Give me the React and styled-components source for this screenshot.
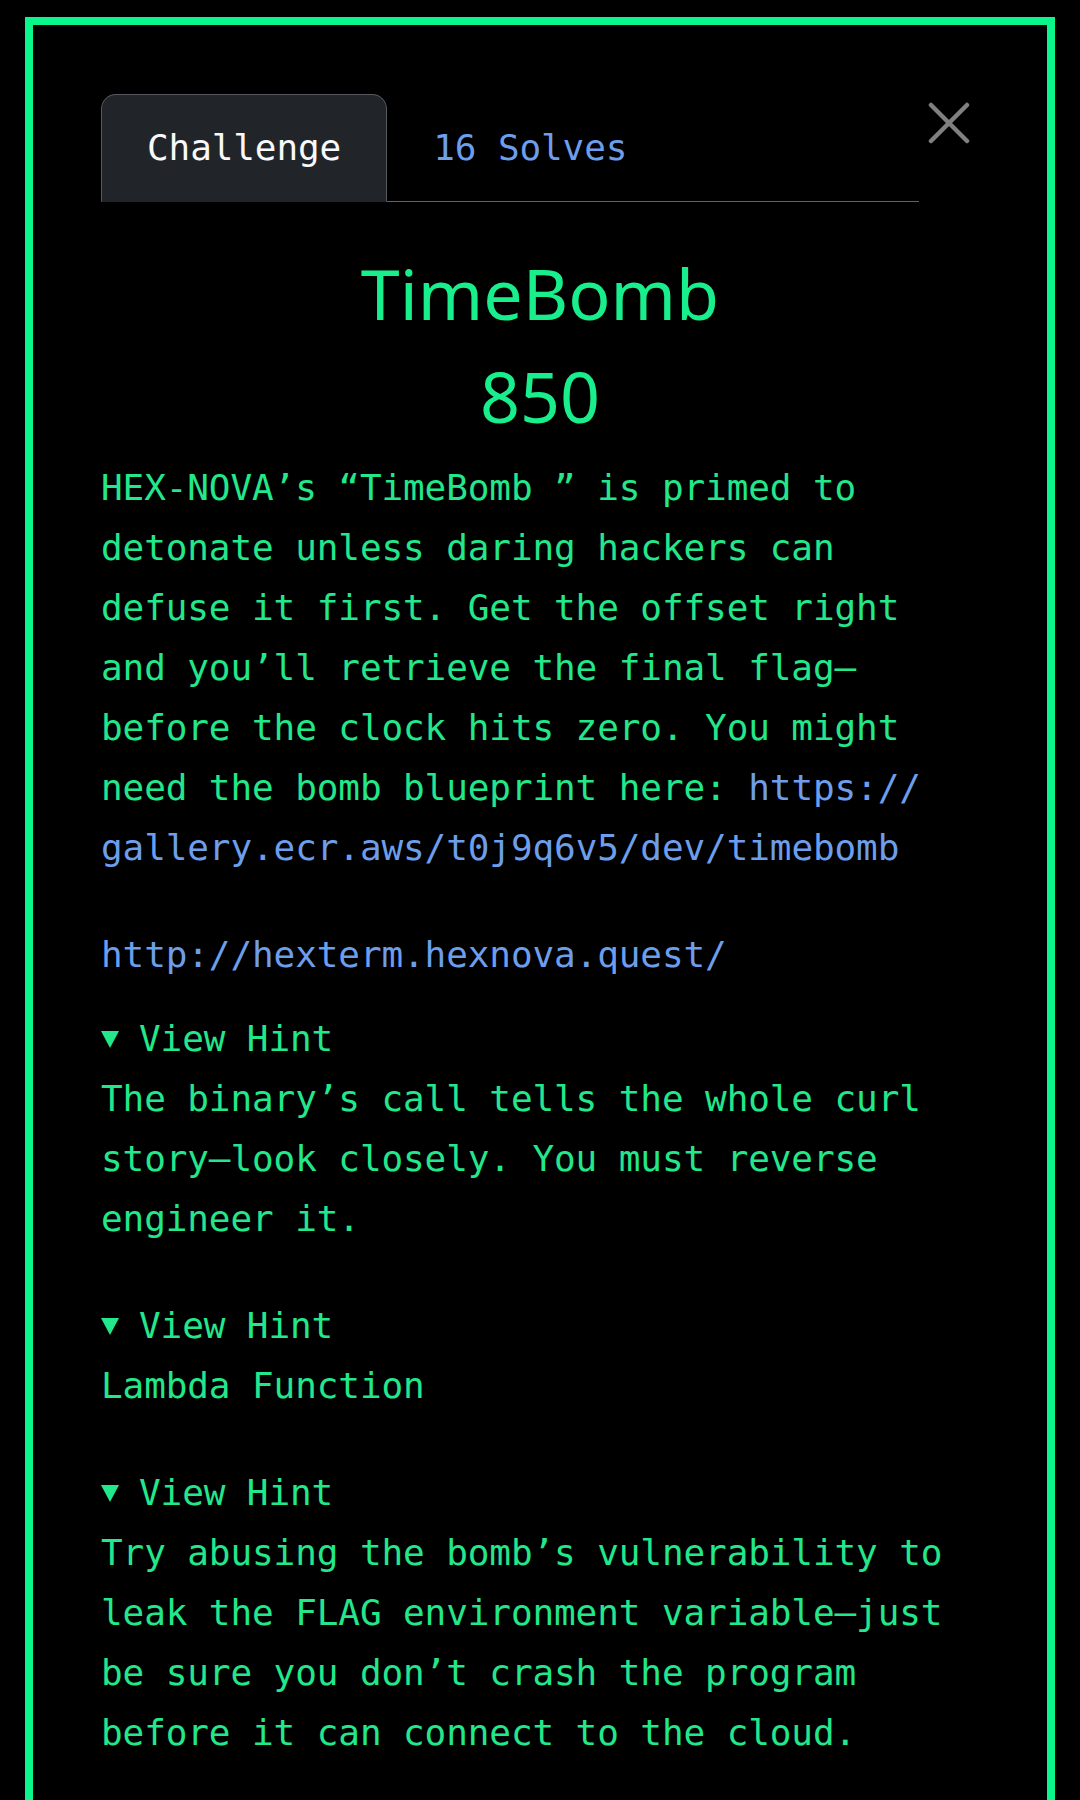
import React, { useState } from 'react';
import styled, { createGlobalStyle, css } from 'styled-components';

const GlobalStyle = createGlobalStyle`
  html, body {
    margin: 0;
    padding: 0;
    background: #000;
  }
  body {
    font-family: "DejaVu Sans Mono", "Liberation Mono", monospace;
  }
`;

const GREEN = '#22e78b';
const BLUE = '#6d9eeb';

const Page = styled.div`
  height: 1800px;
  overflow: hidden;
  box-sizing: border-box;
  padding: 17px 25px 0;
  background: #000;
`;

const Modal = styled.div`
  border: 8px solid #0bf68a;
  padding: 69px 68px 140px;
  background: #000;
`;

const Header = styled.div`
  display: flex;
  align-items: flex-start;
`;

const TabList = styled.nav`
  flex: 1;
  display: flex;
  border-bottom: 1px solid #5f6368;
`;

const Tab = styled.button`
  margin-bottom: -1px;
  padding: 23px 45px;
  font-family: inherit;
  font-size: 36px;
  line-height: 60px;
  letter-spacing: -0.1px;
  border: 1px solid transparent;
  border-radius: 15px 15px 0 0;
  background: transparent;
  color: ${BLUE};
  cursor: pointer;

  ${(props) =>
    props.$active &&
    css`
      background: #212529;
      border-color: #55595e;
      border-bottom-color: #212529;
      color: #f8f9fa;
    `}
`;

const CloseButton = styled.button`
  width: 60px;
  height: 57px;
  padding: 0;
  display: flex;
  align-items: center;
  justify-content: center;
  background: none;
  border: none;
  cursor: pointer;
`;

const ChallengeName = styled.h2`
  margin: 40px 0 0;
  font-family: "Noto Sans", "Open Sans", sans-serif;
  font-weight: 400;
  font-size: 70px;
  line-height: 103px;
  text-align: center;
  color: #19ee8c;
`;

const ChallengeValue = styled(ChallengeName).attrs({ as: 'h3' })`
  margin: 0 0 10px;
`;

const Description = styled.div`
  margin-bottom: 24px;
  color: ${GREEN};
  font-size: 36px;
  line-height: 60px;
  letter-spacing: -0.1px;

  p {
    margin: 0 0 47px;
  }
  p:last-child {
    margin-bottom: 0;
  }
`;

const Link = styled.a`
  color: ${BLUE};
  text-decoration: none;
`;

const Hint = styled.details`
  margin-bottom: 47px;
  color: ${GREEN};
  font-size: 36px;
  line-height: 60px;
  letter-spacing: -0.1px;
`;

const HintSummary = styled.summary`
  list-style: none;
  cursor: pointer;

  &::-webkit-details-marker {
    display: none;
  }
`;

const SummaryRow = styled.span`
  display: flex;
  align-items: center;
  gap: 20px;
`;

const HintText = styled.p`
  margin: 0;
`;

const CloseIcon = () => (
  <svg width="42" height="42" viewBox="0 0 42 42">
    <path d="M3 3 L39 39 M39 3 L3 39" stroke="#808080" strokeWidth="4.5" strokeLinecap="round" />
  </svg>
);

const Caret = () => (
  <svg width="18" height="17" viewBox="0 0 18 17">
    <polygon points="0,0 18,0 9,17" fill={GREEN} />
  </svg>
);

const hints = [
  'The binary’s call tells the whole curl story—look closely. You must reverse engineer it.',
  'Lambda Function',
  'Try abusing the bomb’s vulnerability to leak the FLAG environment variable—just be sure you don’t crash the program before it can connect to the cloud.'
];

export default function App() {
  const [tab, setTab] = useState('challenge');
  return (
    <Page>
      <GlobalStyle />
      <Modal>
        <Header>
          <TabList>
            <Tab $active={tab === 'challenge'} onClick={() => setTab('challenge')}>
              Challenge
            </Tab>
            <Tab $active={tab === 'solves'} onClick={() => setTab('solves')}>
              16 Solves
            </Tab>
          </TabList>
          <CloseButton aria-label="Close">
            <CloseIcon />
          </CloseButton>
        </Header>

        <ChallengeName>TimeBomb</ChallengeName>
        <ChallengeValue>850</ChallengeValue>

        <Description>
          <p>
            HEX-NOVA’s “TimeBomb ” is primed to detonate unless daring hackers can defuse it first. Get the
            offset right and you’ll retrieve the final flag—before the clock hits zero. You might need the
            bomb blueprint here:{' '}
            <Link href="#">
              https://<wbr />gallery.ecr.aws/<wbr />t0j9q6v5/<wbr />dev/<wbr />timebomb
            </Link>
          </p>
          <p>
            <Link href="#">http://hexterm.hexnova.quest/</Link>
          </p>
        </Description>

        {hints.map((text, i) => (
          <Hint key={i} open>
            <HintSummary>
              <SummaryRow>
                <Caret />
                View Hint
              </SummaryRow>
            </HintSummary>
            <HintText>{text}</HintText>
          </Hint>
        ))}
      </Modal>
    </Page>
  );
}
